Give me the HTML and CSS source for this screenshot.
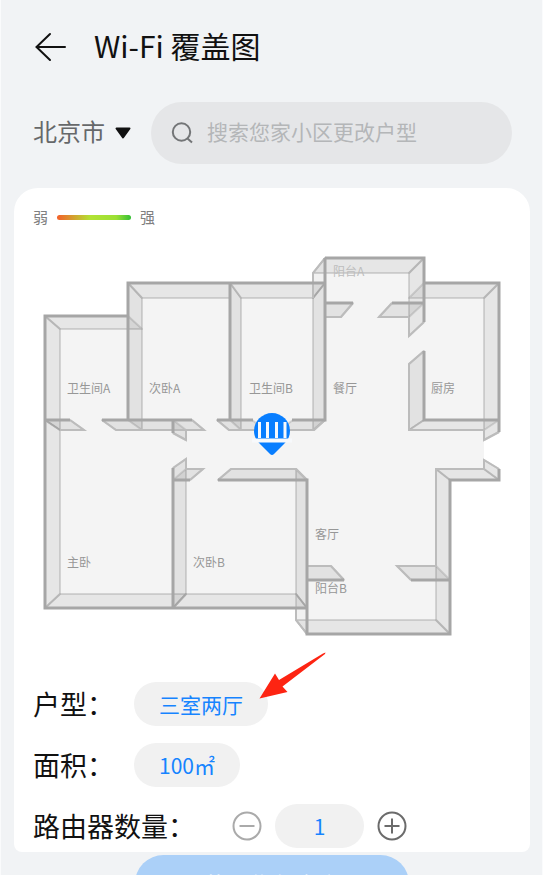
FILE: index.html
```html
<!DOCTYPE html>
<html lang="zh-CN">
<head>
<meta charset="utf-8">
<meta name="viewport" content="width=device-width, initial-scale=1">
<title>Wi-Fi 覆盖图</title>
<link rel="stylesheet" href="styles.css">
</head>
<body>
<div class="app">
  <header class="header">
    <button class="icon-button" type="button" aria-label="返回">
      <svg class="back-icon" viewBox="0 0 32 30" width="32" height="30" aria-hidden="true">
        <path d="M31 15H3M16 2L2.500 15L16 28"/>
      </svg>
    </button>
    <h1 class="title">Wi-Fi 覆盖图</h1>
  </header>

  <div class="search-row">
    <label class="city">
      <select class="city-select" aria-label="城市"><option>北京市</option></select>
      <svg class="caret" viewBox="0 0 16 12" width="16" height="12" aria-hidden="true"><path d="M1.500 1.500H14.500L8 10.500Z"/></svg>
    </label>
    <label class="search">
      <svg class="search-icon" viewBox="0 0 22 22" width="22" height="22" aria-hidden="true"><circle cx="10.500" cy="10" r="8.700"/><path d="M16.500 16.500L21 20.500"/></svg>
      <input class="search-input" type="text" aria-label="搜索" placeholder="搜索您家小区更改户型">
    </label>
  </div>

  <main class="card">
    <div class="legend"><span>弱</span><span class="legend-bar"></span><span>强</span></div>

    <svg class="plan" viewBox="14 236 516 416" role="img" aria-label="户型图">
      <path class="floor" d="M45 316H128V283H325V258H424V283H499V432L484 440V460L499 469V480H450V634H307V608H45Z"/>
      <g class="wall">
        <path d="M128 316H45L60 329H142Z"/>
        <path d="M45 316L60 329V430L45 420Z"/>
        <path d="M45 420L60 430V594L45 608Z"/>
        <path d="M45 608L60 594H186L173 608Z"/>
        <path d="M173 608L186 594H296L307 608Z"/>
        <path d="M128 283L142 298H230V283Z"/>
        <path d="M230 283L241 298H313L325 283Z"/>
        <path d="M325 258L313 273H409L424 258Z"/>
        <path d="M424 258L409 273V336L424 322Z"/>
        <path d="M424 283L409 298H484L499 283Z"/>
        <path d="M499 283L484 298V440L499 432Z"/>
        <path d="M424 420L409 430H484L499 420Z"/>
        <path d="M484 460L499 469V480L484 469Z"/>
        <path d="M436 469H484L499 480H450Z"/>
        <path d="M436 469L450 480V634L436 620Z"/>
        <path d="M307 634L296 620H436L450 634Z"/>
        <path d="M307 608V634L296 620V594Z"/>
        <path d="M325 258L313 273V298L325 283Z"/>
      </g>
      <g class="wall wall-inner">
        <path d="M128 283L142 298V430L128 420Z"/>
        <path d="M230 283L241 298V430L230 420Z"/>
        <path d="M325 283L313 298V430L325 420Z"/>
        <path d="M424 351L409 364V430L424 420Z"/>
        <path d="M173 468L186 459V594L173 608Z"/>
        <path d="M307 480L296 469V594L307 608Z"/>
        <path d="M45 420H70L84 430H60Z"/>
        <path d="M102 420H192L204 430H116Z"/>
        <path d="M173 420L186 430V440L173 433Z"/>
        <path d="M217 420H252L265 430H229Z"/>
        <path d="M293 420H325L314 430H280Z"/>
        <path d="M325 303H353L341 317H325Z"/>
        <path d="M392 303H424L409 317H379Z"/>
        <path d="M173 480H190L203 469H186Z"/>
        <path d="M218 480H307L296 469H231Z"/>
        <path d="M307 580H344L331 566H307Z"/>
        <path d="M411 580H450L436 566H397Z"/>
      </g>
      <path class="rim" d="M70 420L84 430H60M102 420L116 430H204L192 420M173 433L186 440V430M173 468L186 459V469H203L190 480M217 420L229 430H265M280 430H314L325 420M218 480L231 469H296L307 480M325 258L313 273V298M353 303L341 317H325M392 303L379 317H409M424 322L409 336V317M424 351L409 364V430H484V440L499 432M499 469L484 460V469H436V566H397L411 580M307 566H331L344 580M296 608V620L307 634"/>
      <path class="edge" d="M45 420V316H128M128 420V283H325M230 283V420M325 258V420H292M325 258H424V322M424 283H499V432M424 351V420H499M325 303H353M392 303H424M45 420H70M102 420H192M173 420V433M217 420H253M45 420V608H307M173 608V468M173 480H190M218 480H307V634H450V480H499V469M307 580H344M411 580H450"/>
      <g class="room">
        <text x="67" y="393">卫生间A</text>
        <text x="149" y="393">次卧A</text>
        <text x="249" y="393">卫生间B</text>
        <text x="333" y="393">餐厅</text>
        <text x="431" y="393">厨房</text>
        <text class="room-faint" x="333" y="276">阳台A</text>
        <text x="67" y="567">主卧</text>
        <text x="193" y="567">次卧B</text>
        <text x="315" y="539">客厅</text>
        <text x="315" y="593">阳台B</text>
      </g>
      <g class="marker">
        <path class="marker-body" d="M254 431A18 18 0 0 1 290 431C290 436 288 440 284 444L274 454Q272 456 270 454L260 444C256 440 254 436 254 431Z"/>
        <path class="marker-bars" d="M259.500 422V438M267.500 422V438M276.500 422V438M285 422V438"/>
        <path class="marker-base" d="M252 440.500H292"/>
      </g>
    </svg>

    <div class="settings">
      <div class="row">
        <span class="label" id="layout-label">户型：</span>
        <button class="pill" type="button" aria-describedby="layout-label">三室两厅</button>
        <svg class="pointer" viewBox="0 0 68 48" width="68" height="48" aria-hidden="true"><path d="M66.500 .500L64 1.500L20 28L16 21.500L.500 46.500L28.500 40L23.500 34.500L66 2Z"/></svg>
      </div>
      <div class="row">
        <span class="label" id="area-label">面积：</span>
        <button class="pill" type="button" aria-describedby="area-label">100㎡</button>
      </div>
      <div class="row">
        <label class="label label-wide" for="count">路由器数量：</label>
        <div class="stepper">
          <button class="icon-button minus" type="button" aria-label="减少"><svg viewBox="0 0 30 30" width="30" height="30" aria-hidden="true"><circle cx="15" cy="15" r="13.500"/><path d="M7.500 15H22.500"/></svg></button>
          <input class="pill count" id="count" type="text" inputmode="numeric" value="1">
          <button class="icon-button plus" type="button" aria-label="增加"><svg viewBox="0 0 30 30" width="30" height="30" aria-hidden="true"><circle cx="15" cy="15" r="13.500"/><path d="M7.500 15H22.500M15 7.500V22.500"/></svg></button>
        </div>
      </div>
    </div>
  </main>

  <footer class="footer"><button class="primary" type="button">获取优化方案</button></footer>
</div>
</body>
</html>
```
FILE: styles.css
```css
* {
  box-sizing: border-box;
}

body {
  margin: 0;
  background: #f1f3f5;
  color: #111;
  font-family: "Noto Sans CJK SC", sans-serif;
}

button,
input,
select {
  margin: 0;
  padding: 0;
  border: 0;
  background: none;
  font: inherit;
  color: inherit;
}

svg {
  display: block;
  flex: none;
}

.app {
  display: flex;
  flex-direction: column;
  height: 100vh;
  overflow: hidden;
  padding: 20px 12px 0 13px;
  border: solid #fafbfc;
  border-width: 0 1px;
}

.app > * {
  flex: none;
}

.header {
  display: flex;
  align-items: center;
  gap: 28px;
  height: 54px;
  padding-left: 20px;
}

.back-icon {
  fill: none;
  stroke: #111;
  stroke-width: 2;
  stroke-linecap: round;
}

.title {
  margin: 0;
  padding-bottom: 4px;
  font-size: 30px;
  line-height: 50px;
  font-weight: 400;
}

.search-row {
  display: flex;
  align-items: center;
  gap: 20px;
  margin-top: 28px;
  padding: 0 18px 0 19px;
  font-family: Roboto, "Noto Sans CJK SC", sans-serif;
}

.city {
  display: flex;
  align-items: center;
  gap: 10px;
}

.city-select {
  appearance: none;
  color: #66686a;
  font-size: 24px;
  line-height: 36px;
}

.caret {
  fill: #111;
  stroke: #111;
  stroke-width: 2;
  stroke-linejoin: round;
}

.search {
  display: flex;
  flex: 1;
  align-items: center;
  gap: 14px;
  min-width: 0;
  height: 62px;
  padding: 0 20px;
  border-radius: 31px;
  background: #e5e6e8;
}

.search-icon {
  fill: none;
  stroke: #737577;
  stroke-width: 2;
}

.search-input {
  flex: 1;
  min-width: 0;
  font-size: 21px;
  line-height: 32px;
}

.search-input::placeholder {
  color: #b4b6b8;
  opacity: 1;
}

.card {
  margin-top: 24px;
  padding-bottom: 4px;
  border-radius: 24px 24px 8px 8px;
  background: #fff;
}

.legend {
  display: flex;
  align-items: center;
  gap: 9px;
  height: 48px;
  padding: 10px 19px 0;
  color: #808080;
  font-size: 15px;
  line-height: 20px;
}

.legend-bar {
  width: 74px;
  height: 5px;
  border-radius: 3px;
  background: linear-gradient(90deg, #f4602a, #b2e234 45%, #9be034 80%, #35bf35);
}

.plan {
  width: 100%;
  height: auto;
}

.floor {
  fill: #f4f4f4;
}

.wall {
  fill: rgba(0, 0, 0, 0.055);
  stroke: rgba(150, 150, 150, 0.35);
  stroke-width: 2;
  stroke-linejoin: round;
}

.wall-inner {
  fill: rgba(0, 0, 0, 0.07);
}

.rim {
  fill: none;
  stroke: #bcbcbc;
  stroke-width: 2;
}

.edge {
  fill: none;
  stroke: #a6a6a6;
  stroke-width: 3;
  stroke-linejoin: miter;
}

.room {
  fill: #979797;
  font-size: 12px;
}

.room-faint {
  fill: #bdbdbd;
}

.marker-body {
  fill: #087eff;
}

.marker-bars,
.marker-base {
  fill: none;
  stroke: #f7f9fc;
  stroke-width: 3;
}

.marker-base {
  stroke-width: 4;
}

.settings {
  display: flex;
  flex-direction: column;
  gap: 17px;
  padding: 30px 19px 0;
}

.row {
  position: relative;
  display: flex;
  align-items: center;
  height: 44px;
}

.label {
  width: 101px;
  font-size: 27px;
  line-height: 40px;
  white-space: nowrap;
}

.label-wide {
  width: 199px;
}

.pill {
  height: 44px;
  padding: 0 25px;
  border-radius: 22px;
  background: #f1f1f1;
  color: #1684ff;
  font-size: 21px;
  line-height: 44px;
}

.pointer {
  position: absolute;
  left: 226px;
  top: -30px;
  fill: #fd2412;
}

.stepper {
  display: flex;
  align-items: center;
  gap: 13px;
}

.count {
  width: 89px;
  text-align: center;
}

.icon-button svg {
  fill: none;
  stroke-width: 2;
}

.minus {
  stroke: #aaa;
}

.plus {
  stroke: #6b6b6b;
}

.footer {
  display: flex;
  justify-content: center;
  padding-top: 3px;
}

.primary {
  width: 274px;
  height: 57px;
  border-radius: 30px;
  background: #abd0f8;
  color: #fff;
  font-size: 23px;
}
```
